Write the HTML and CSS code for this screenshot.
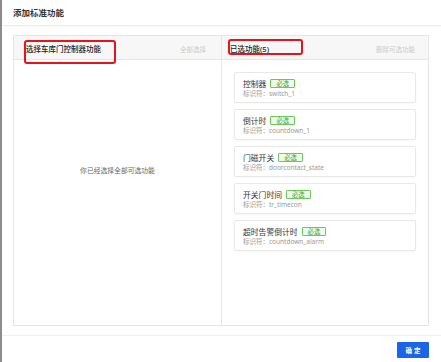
FILE: index.html
```html
<!DOCTYPE html>
<html lang="zh-CN">
<head>
    <meta charset="UTF-8">
    <title>添加标准功能</title>
    <meta name="viewport" content="width=device-width, initial-scale=1.0">
    <link rel="stylesheet" href="styles.css">
</head>
<body>
    <div class="modal">
        <div class="modal-header">添加标准功能</div>

        <div class="modal-body">
            <div class="panel">
                <div class="col col-left">
                    <div class="col-head">
                        <span class="col-title">选择车库门控制器功能</span>
                        <span class="col-action">全部选择</span>
                        <div class="mark mark-left"></div>
                    </div>
                    <div class="col-body empty">你已经选择全部可选功能</div>
                </div>

                <div class="col col-right">
                    <div class="col-head">
                        <span class="col-title">已选功能(5)</span>
                        <span class="col-action">删除可选功能</span>
                        <div class="mark mark-right"></div>
                    </div>
                    <div class="col-body list">
                        <div class="card">
                            <div class="card-title">控制器 <span class="badge">必选</span></div>
                            <div class="card-id">标识符：switch_1</div>
                        </div>
                        <div class="card">
                            <div class="card-title">倒计时 <span class="badge">必选</span></div>
                            <div class="card-id">标识符：countdown_1</div>
                        </div>
                        <div class="card">
                            <div class="card-title">门磁开关 <span class="badge">必选</span></div>
                            <div class="card-id">标识符：doorcontact_state</div>
                        </div>
                        <div class="card">
                            <div class="card-title">开关门时间 <span class="badge">必选</span></div>
                            <div class="card-id">标识符：tr_timecon</div>
                        </div>
                        <div class="card">
                            <div class="card-title">超时告警倒计时 <span class="badge">必选</span></div>
                            <div class="card-id">标识符：countdown_alarm</div>
                        </div>
                    </div>
                </div>
            </div>
        </div>

        <div class="modal-footer">
            <button class="btn-ok">确定</button>
        </div>
    </div>
</body>
</html>
```

FILE: styles.css
```css
* {
    box-sizing: border-box;
}

body {
    margin: 0;
    background: #fff;
    border-left: 2px solid #8c8c8c;
    height: 362px;
    overflow: hidden;
    font-family: "Noto Sans", "Noto Sans CJK SC", sans-serif;
    color: #333;
}

.modal {
    display: flex;
    flex-direction: column;
    height: 362px;
}

.modal-header {
    height: 26px;
    line-height: 26px;
    padding: 0 11px;
    font-size: 8.5px;
    font-weight: 600;
    color: #333;
    border-bottom: 1px solid #ececec;
    box-shadow: 0 1px 2px rgba(0, 0, 0, 0.03);
}

.modal-body {
    padding: 9px 12px 9px 11px;
}

.panel {
    display: grid;
    grid-template-columns: 1fr 1fr;
    height: 291px;
    border: 1px solid #e6e6e6;
}

.col {
    display: flex;
    flex-direction: column;
}

.col-right {
    border-left: 1px solid #e6e6e6;
}

.col-head {
    position: relative;
    height: 24px;
    display: flex;
    align-items: center;
    justify-content: space-between;
    background: #f7f7f7;
    border-bottom: 1px solid #e6e6e6;
    padding: 2px 15px 0 12px;
}

.col-right .col-head {
    padding-left: 8px;
    padding-right: 13px;
}

.col-title {
    font-size: 7.5px;
    font-weight: 500;
    color: #222;
}

.col-action {
    font-size: 6.5px;
    color: #ccc;
}

.mark {
    position: absolute;
    border: 2px solid #e5141b;
    border-radius: 3px;
}

.mark-left {
    left: 10px;
    top: 4px;
    width: 92px;
    height: 24px;
}

.mark-right {
    left: 6px;
    top: 3px;
    width: 75px;
    height: 16px;
}

.col-body {
    flex: 1;
}

.empty {
    padding-top: 106px;
    text-align: center;
    font-size: 6.8px;
    line-height: 10px;
    color: #666;
}

.list {
    display: flex;
    flex-direction: column;
    gap: 6px;
    padding: 12px 12px;
}

.card {
    height: 31px;
    padding: 5px 8px 4px;
    border: 1px solid #e8e8e8;
    border-radius: 2px;
    background: #fff;
    box-shadow: 0 1px 2px rgba(0, 0, 0, 0.03);
}

.card-title {
    display: flex;
    align-items: center;
    gap: 4px;
    height: 11px;
    font-size: 7.8px;
    font-weight: 400;
    color: #333;
}

.badge {
    display: inline-block;
    height: 9px;
    line-height: 7px;
    padding: 0 5px;
    font-size: 6.3px;
    color: #3ba13b;
    background: #effbea;
    border: 1px solid #6cc85a;
    border-radius: 1px;
}

.card-id {
    height: 10px;
    line-height: 10px;
    font-size: 6.5px;
    color: #999;
}

.modal-footer {
    flex: 1;
    display: flex;
    justify-content: flex-end;
    align-items: flex-start;
    padding: 6px 12px;
    border-top: 1px solid #efefef;
}

.btn-ok {
    width: 32px;
    height: 16px;
    padding: 0;
    border: none;
    border-radius: 1px;
    background: #1b65e6;
    color: #fff;
    font-family: "Noto Sans CJK SC", sans-serif;
    font-size: 6.5px;
    font-weight: 700;
    letter-spacing: 2px;
    text-indent: 2px;
    cursor: pointer;
}
```
